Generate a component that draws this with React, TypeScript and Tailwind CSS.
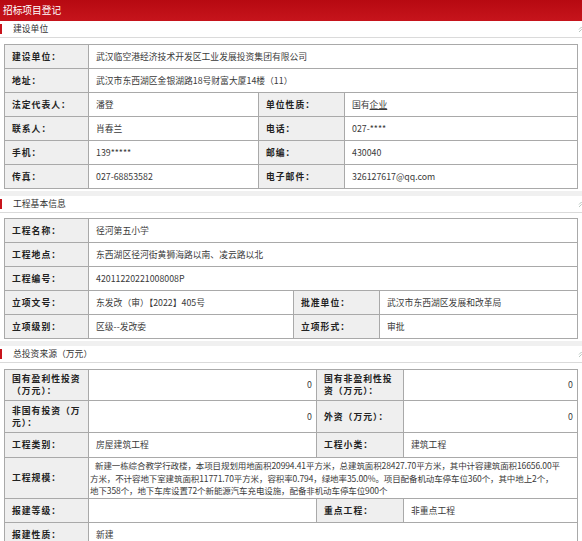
import React from 'react';

const labelCls = 'flex items-center bg-[#efefef] px-[7px] font-bold tracking-[1px] text-[#222] leading-[12px]';
const valueCls = 'flex items-center bg-white px-[7px] text-[#3a3a3a] leading-[12px]';
const numCls = 'flex items-center justify-end bg-white pr-[4px] text-[#3a3a3a]';

function SectionHeader({ title }: { title: string }) {
    return (
        <div className="flex h-[17px] items-center border-b border-[#dadada] bg-white">
            <span className="h-[10px] w-[2px] bg-[#c8141c]" />
            <span className="ml-[11px] text-[8.8px] text-[#333]">{title}</span>
            {/* collapse icon, mostly cut off at the right edge */}
            <svg className="ml-auto mr-[-3px]" width="7" height="7" viewBox="0 0 7 7" fill="none" stroke="#b9c6c0" strokeWidth="1">
                <path d="M1 3.5 3.5 1 6 3.5M1 6 3.5 3.5 6 6" />
            </svg>
        </div>
    );
}

function Band() {
    return <div className="mt-[2px] h-[5px] bg-[#f0f0f0]" />;
}

export default function App() {
    return (
        <div className="h-[541px] w-[582px] overflow-hidden bg-white font-['Noto_Sans_CJK_SC',sans-serif] text-[8.8px]">
            {/* Title bar */}
            <div className="flex h-[21px] items-center bg-gradient-to-b from-[#b70911] to-[#c6141c] pl-[3px] text-[9.7px] text-white">
                招标项目登记
            </div>

            {/* 建设单位 */}
            <SectionHeader title="建设单位" />
            <div className="mx-[4px] mt-[6px] grid grid-cols-[83px_169px_85px_1fr] auto-rows-[23px] gap-px border border-[#a9a9a9] bg-[#a9a9a9]">
                <div className={labelCls}>建设单位：</div>
                <div className={`${valueCls} col-span-3`}>武汉临空港经济技术开发区工业发展投资集团有限公司</div>

                <div className={labelCls}>地址：</div>
                <div className={`${valueCls} col-span-3`}>武汉市东西湖区金银湖路18号财富大厦14楼（11）</div>

                <div className={labelCls}>法定代表人：</div>
                <div className={valueCls}>潘登</div>
                <div className={labelCls}>单位性质：</div>
                <div className={valueCls}>
                    国有<span className="underline">企业</span>
                </div>

                <div className={labelCls}>联系人：</div>
                <div className={valueCls}>肖春兰</div>
                <div className={labelCls}>电话：</div>
                <div className={valueCls}>027-****</div>

                <div className={labelCls}>手机：</div>
                <div className={valueCls}>139*****</div>
                <div className={labelCls}>邮编：</div>
                <div className={valueCls}>430040</div>

                <div className={labelCls}>传真：</div>
                <div className={valueCls}>027-68853582</div>
                <div className={labelCls}>电子邮件：</div>
                <div className={valueCls}>326127617@qq.com</div>
            </div>

            {/* 工程基本信息 */}
            <Band />
            <SectionHeader title="工程基本信息" />
            <div className="mx-[4px] mt-[5px] grid grid-cols-[83px_204px_85px_1fr] auto-rows-[23px] gap-px border border-[#a9a9a9] bg-[#a9a9a9]">
                <div className={labelCls}>工程名称：</div>
                <div className={`${valueCls} col-span-3`}>径河第五小学</div>

                <div className={labelCls}>工程地点：</div>
                <div className={`${valueCls} col-span-3`}>东西湖区径河街黄狮海路以南、凌云路以北</div>

                <div className={labelCls}>工程编号：</div>
                <div className={`${valueCls} col-span-3`}>42011220221008008P</div>

                <div className={labelCls}>立项文号：</div>
                <div className={valueCls}>东发改（审）【2022】405号</div>
                <div className={labelCls}>批准单位：</div>
                <div className={valueCls}>武汉市东西湖区发展和改革局</div>

                <div className={labelCls}>立项级别：</div>
                <div className={valueCls}>区级--发改委</div>
                <div className={labelCls}>立项形式：</div>
                <div className={valueCls}>审批</div>
            </div>

            {/* 总投资来源 */}
            <Band />
            <SectionHeader title="总投资来源（万元）" />
            <div className="mx-[4px] mt-[6px] grid grid-cols-[83px_227px_86px_1fr] auto-rows-[minmax(23px,auto)] gap-px border border-[#a9a9a9] bg-[#a9a9a9]">
                <div className={`${labelCls} h-[30px]`}>国有盈利性投资（万元）：</div>
                <div className={numCls}>0</div>
                <div className={labelCls}>国有非盈利性投资（万元）：</div>
                <div className={numCls}>0</div>

                <div className={`${labelCls} h-[31px]`}>非国有投资（万元）：</div>
                <div className={numCls}>0</div>
                <div className={labelCls}>外资（万元）：</div>
                <div className={numCls}>0</div>

                <div className={`${labelCls} h-[24px]`}>工程类别：</div>
                <div className={valueCls}>房屋建筑工程</div>
                <div className={labelCls}>工程小类：</div>
                <div className={valueCls}>建筑工程</div>

                <div className={`${labelCls} h-[40px]`}>工程规模：</div>
                <div className="col-span-3 flex flex-col justify-center overflow-hidden whitespace-nowrap bg-white pl-[1px] text-[8.5px] leading-[12.5px] tracking-[-0.1px] text-[#3a3a3a]">
                    <span className="pl-[5px]">新建一栋综合教学行政楼，本项目规划用地面积20994.41平方米，总建筑面积28427.70平方米，其中计容建筑面积16656.00平</span>
                    <span>方米，不计容地下室建筑面积11771.70平方米，容积率0.794，绿地率35.00%。项目配备机动车停车位360个，其中地上2个，</span>
                    <span>地下358个，地下车库设置72个新能源汽车充电设施，配备非机动车停车位900个</span>
                </div>

                <div className={labelCls}>报建等级：</div>
                <div className={valueCls} />
                <div className={labelCls}>重点工程：</div>
                <div className={valueCls}>非重点工程</div>

                <div className={labelCls}>报建性质：</div>
                <div className={`${valueCls} col-span-3`}>新建</div>
            </div>
        </div>
    );
}
